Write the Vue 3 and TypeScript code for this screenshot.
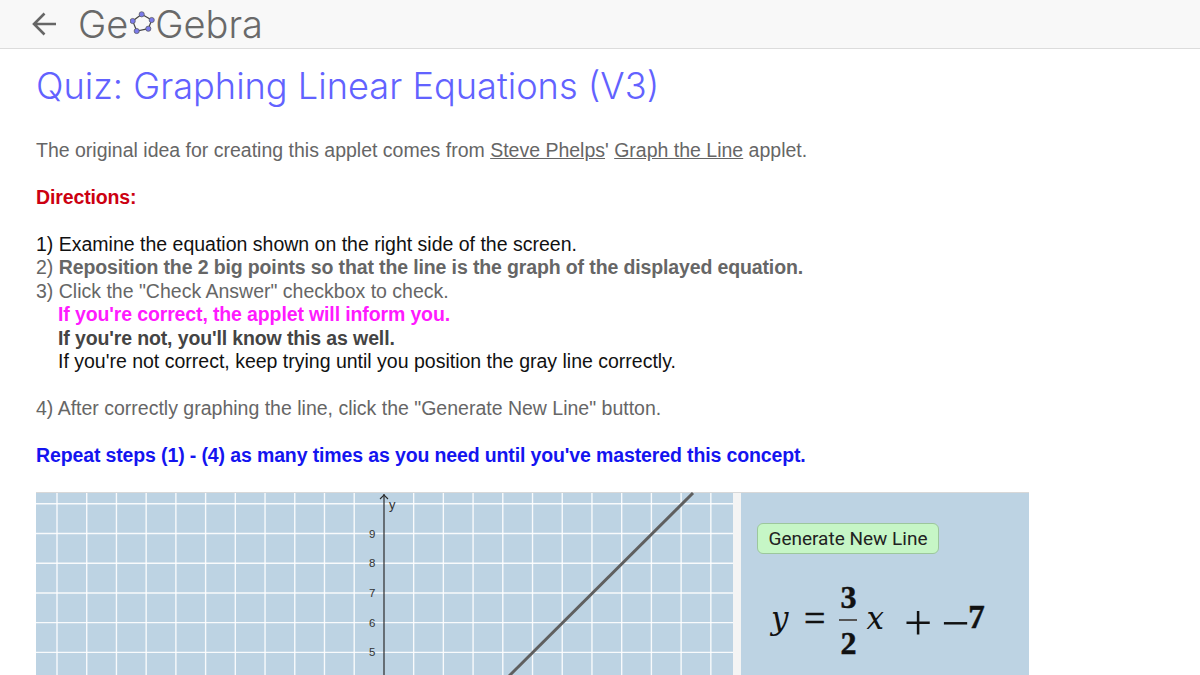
<script setup lang="ts">
const xLines: number[] = [-1, 0, 1, 2, 3, 4, 5, 6, 7, 8, 9, 10, 12, 13, 14, 15, 16, 17, 18, 19, 20, 21, 22, 23].map((n) => 21 + n * 29.72)
const yTicks: number[] = [9, 8, 7, 6, 5]
const yOf = (n: number): number => 41.5 + (9 - n) * 29.72
</script>

<template>
  <div class="page">
    <header class="topbar">
      <svg class="back" viewBox="0 0 26 26" width="26" height="26">
        <path d="M24 13H3M12.5 2.5L2 13l10.5 10.5" fill="none" stroke="#666" stroke-width="2.6" />
      </svg>
      <div class="logo">
        <span>Ge</span>
        <svg class="gon" viewBox="0 0 26 26" width="26" height="26">
          <path d="M11.7 3.3L21.7 9 18.3 17.7 6.7 20 2.7 10Z" fill="none" stroke="#444" stroke-width="1.2" />
          <circle cx="11.7" cy="3.3" r="2.6" /><circle cx="21.7" cy="9" r="2.6" /><circle cx="18.3" cy="17.7" r="2.6" />
          <circle cx="6.7" cy="20" r="2.6" /><circle cx="2.7" cy="10" r="2.6" />
        </svg>
        <span>Gebra</span>
      </div>
    </header>

    <main class="content">
      <h1>Quiz: Graphing Linear Equations (V3)</h1>
      <p class="gray">The original idea for creating this applet comes from <u>Steve Phelps</u>' <u>Graph the Line</u> applet.</p>
      <p class="red"><b>Directions:</b></p>
      <p>
        <span class="line">1) Examine the equation shown on the right side of the screen.</span>
        <span class="line gray">2) <b>Reposition the 2 big points so that the line is the graph of the displayed equation.</b></span>
        <span class="line gray">3) Click the "Check Answer" checkbox to check.</span>
        <span class="line indent magenta"><b>If you're correct, the applet will inform you.</b></span>
        <span class="line indent dark"><b>If you're not, you'll know this as well.</b></span>
        <span class="line indent">If you're not correct, keep trying until you position the gray line correctly.</span>
      </p>
      <p class="gray">4) After correctly graphing the line, click the "Generate New Line" button.</p>
      <p class="blue"><b>Repeat steps (1) - (4) as many times as you need until you've mastered this concept.</b></p>

      <section class="applet">
        <svg class="graph" viewBox="0 0 697 184" width="697" height="184">
          <line v-for="x in xLines" :key="x" :x1="x" :x2="x" y1="1" y2="184" stroke="#fff" stroke-width="1.4" opacity="0.9" />
          <line x1="0" x2="697" y1="11.8" y2="11.8" stroke="#fff" stroke-width="1.4" opacity="0.9" />
          <line v-for="n in yTicks" :key="n" x1="0" x2="697" :y1="yOf(n)" :y2="yOf(n)" stroke="#fff" stroke-width="1.4" opacity="0.9" />
          <line x1="348" x2="348" y1="2" y2="184" stroke="#2b2b2b" stroke-width="1.2" />
          <path d="M344 7l4-4 4 4" fill="none" stroke="#2b2b2b" stroke-width="1.1" />
          <text x="353" y="17" class="axis-y">y</text>
          <text v-for="n in yTicks" :key="'t' + n" x="333" :y="yOf(n) + 4" class="tick">{{ n }}</text>
          <line x1="473" y1="184" x2="657" y2="1" stroke="#5f5f5f" stroke-width="3" />
        </svg>
        <div class="splitter"></div>
        <div class="side">
          <button class="gen">Generate New Line</button>
          <div class="eq">
            <i class="ey">y</i>
            <span class="eq-sign">=</span>
            <span class="frac"><b>3</b><b class="den">2</b></span>
            <i class="ex">x</i>
            <span class="plus">+</span>
            <span class="minus">−</span><b class="seven">7</b>
          </div>
        </div>
      </section>
    </main>
  </div>
</template>

<style>
html, body { margin: 0; background: #fff; }
</style>

<style scoped>
.page {
  height: 675px;
  overflow: hidden;
  font-family: "Liberation Sans", Arial, sans-serif;
  font-size: 19.5px;
  line-height: 23.4px;
  color: #111;
}
.page b { letter-spacing: -0.13px; }
.topbar {
  height: 48px;
  background: #f8f8f8;
  border-bottom: 1px solid #dcdcdc;
  display: flex;
  align-items: center;
  padding-left: 32px;
}
.back { margin-right: 20px; }
.logo {
  display: flex;
  align-items: center;
  font-family: "Inter", sans-serif;
  font-size: 38px;
  font-weight: 300;
  color: #696969;
  line-height: 48px;
}
.gon { margin: 0 -1px 0 2px; }
.gon circle { fill: #7b7bea; stroke: #555; stroke-width: 0.7; }
.content { padding-left: 36px; }
h1 {
  margin: 14px 0 0;
  height: 46px;
  font-family: "Inter", sans-serif;
  font-weight: 300;
  font-size: 36.2px;
  line-height: 46px;
  color: #6262ff;
}
p { margin: 0 0 23.4px; }
.content h1 + p { margin-top: 30.3px; }
.line { display: block; }
.indent { padding-left: 22px; }
.gray { color: #666; }
.dark { color: #444; }
.red { color: #cc0011; }
.magenta { color: #ff1aff; }
.blue { color: #1414f0; }
.applet {
  width: 993px;
  height: 184px;
  margin-top: 25px;
  display: flex;
  background: #bdd3e3;
  box-shadow: inset 0 1px 0 #d8d8d8;
}
.graph { display: block; flex: none; }
.tick { font-family: "Liberation Sans", sans-serif; font-size: 11.5px; fill: #333; }
.axis-y { font-family: "Liberation Sans", sans-serif; font-size: 13px; fill: #333; }
.splitter { width: 8px; background: #f4f4f4; flex: none; margin-top: 1px; }
.side { flex: 1; padding: 31px 0 0 16px; }
.gen {
  display: block;
  height: 31px;
  width: 182px;
  padding: 0;
  background: #c6f6c6;
  border: 1px solid #9cc79c;
  border-radius: 6px;
  font-family: "Roboto", sans-serif;
  font-size: 19px;
  color: #222;
}
.eq {
  display: flex;
  align-items: center;
  margin: 21px 0 0 14px;
  font-family: "Liberation Serif", serif;
  font-size: 32px;
  line-height: 36px;
  color: #111;
}
.eq i { font-family: "DejaVu Serif", serif; font-size: 31px; margin-bottom: 4px; }
.eq b { -webkit-text-stroke: 0.5px #111; }
.ey { width: 20px; }
.eq-sign { font-size: 38px; margin: 0 14px 3px 13px; -webkit-text-stroke: 0.5px #111; }
.frac {
  display: flex;
  flex-direction: column;
  align-items: center;
  font-size: 32px;
  line-height: 44px;
  width: 18px;
}
.frac b + b { border-top: 2px solid #555; width: 18px; text-align: center; }
.eq .ex { margin-left: 9px; width: 20px; }
.plus { font-size: 50px; margin: 6px 9px 0 17.5px; }
.minus { font-size: 50px; margin: 6px -1px 0 0; }
.seven { font-size: 33px; margin-bottom: 6px; }
</style>
